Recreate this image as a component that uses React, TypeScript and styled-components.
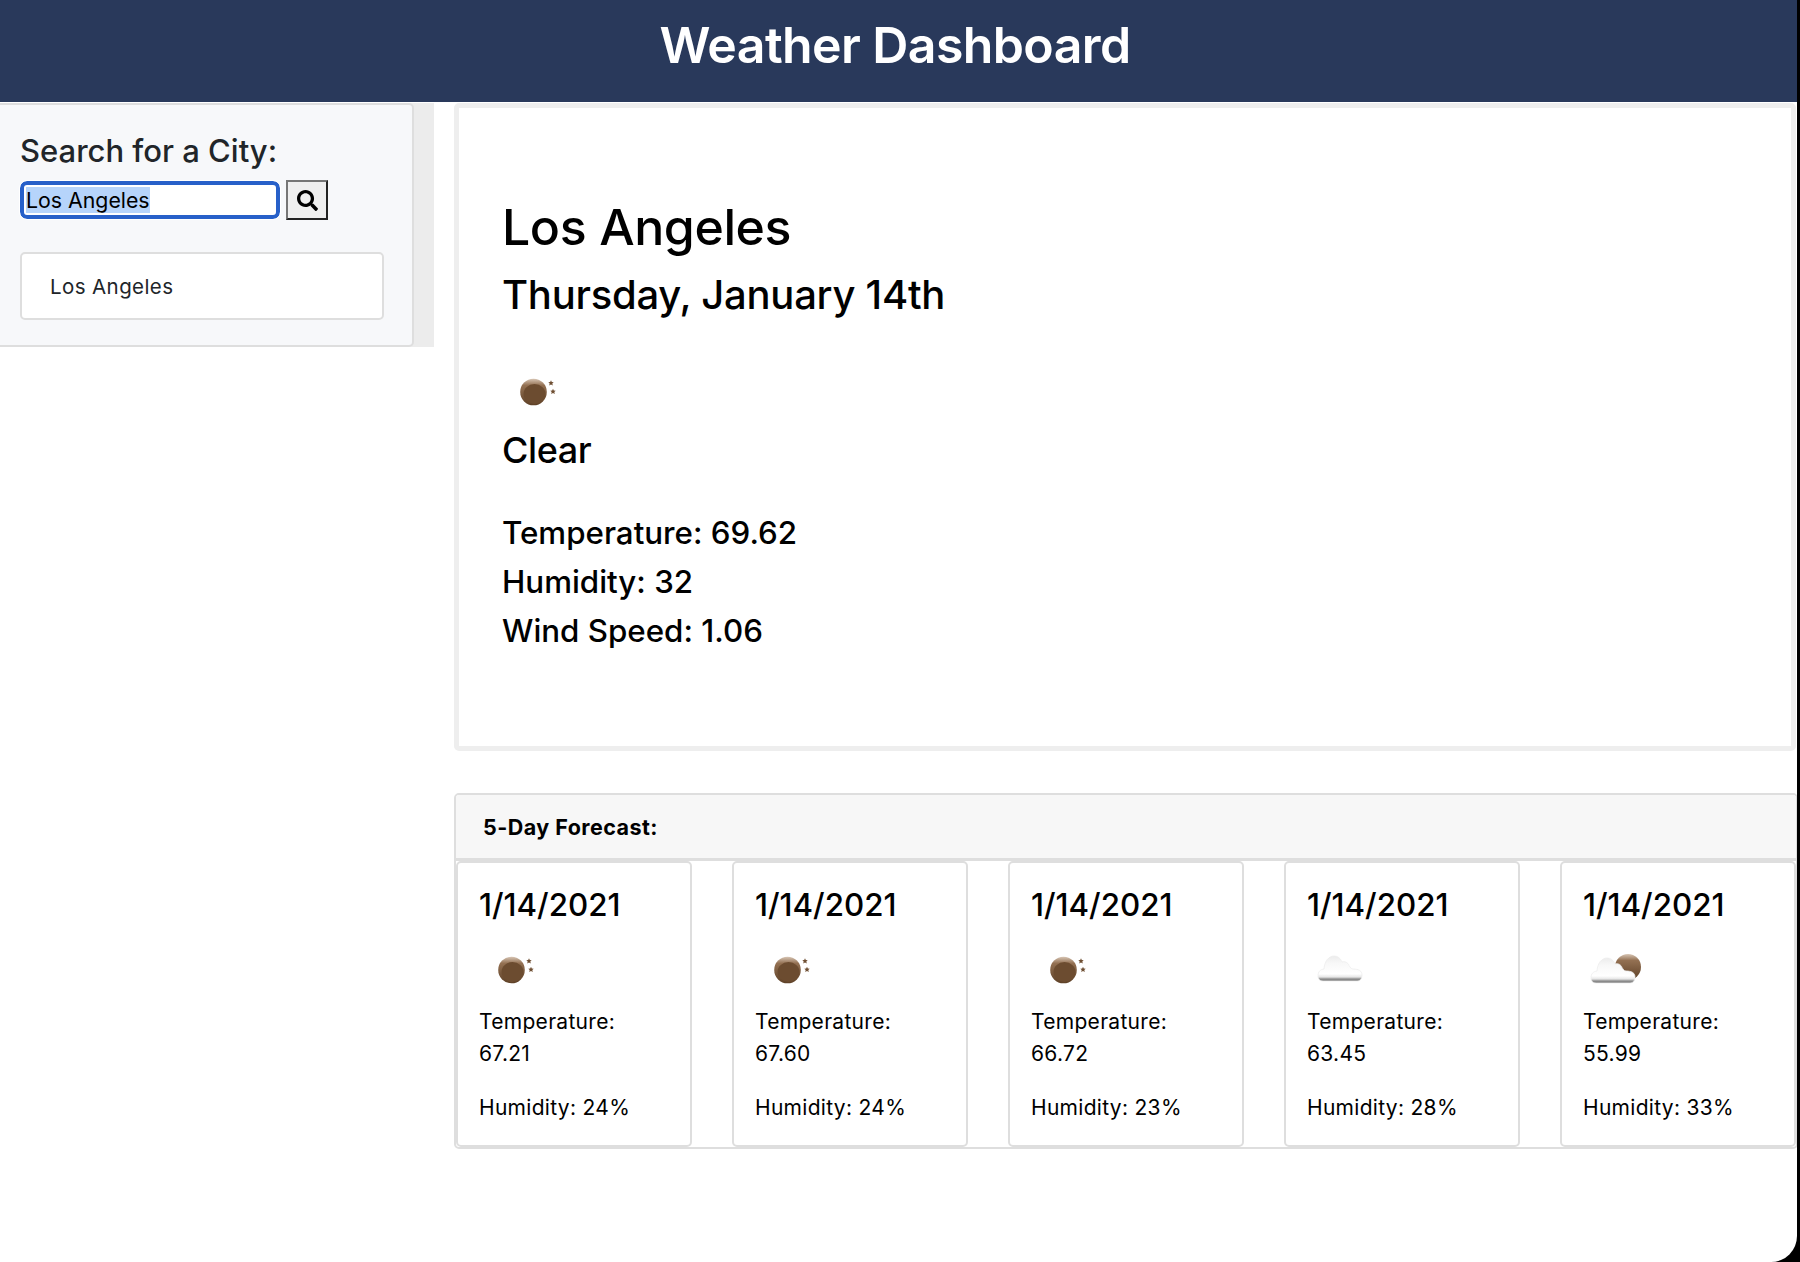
import { useEffect, useRef } from 'react';
import styled, { createGlobalStyle } from 'styled-components';
import { FaSearch } from 'react-icons/fa';

const GlobalStyle = createGlobalStyle`
  html, body {
    margin: 0;
    padding: 0;
    background: #000;
  }
  body {
    font-family: Inter, "Liberation Sans", sans-serif;
    color: #000;
  }
`;

const Page = styled.div`
  width: 1797px;
  height: 1262px;
  background: #fff;
  border-bottom-right-radius: 26px;
  overflow: hidden;
`;
const Header = styled.header`
  height: 102px;
  background: #29395b;
  color: #fff;
  display: flex;
  align-items: center;
  justify-content: center;
  padding-bottom: 12px;
  box-sizing: border-box;
`;
const Title = styled.h1`
  margin: 0 0 0 -7px;
  font-size: 50px;
  font-weight: 600;
  letter-spacing: -0.6px;
`;
const Content = styled.div`
  display: flex;
  align-items: flex-start;
  gap: 20px;
  padding-top: 1px;
`;
const Sidebar = styled.aside`
  width: 434px;
  flex: none;
  background: #ececec;
`;
const SearchCard = styled.div`
  width: 414px;
  height: 244px;
  box-sizing: border-box;
  background: #f7f8fa;
  border: 2px solid #dedede;
  border-left: none;
  border-radius: 0 5px 5px 0;
  padding: 27px 0 0 20px;
`;
const SearchLabel = styled.h2`
  margin: 0;
  font-size: 31px;
  line-height: 38px;
  font-weight: 500;
  color: #212529;
`;
const SearchRow = styled.form`
  display: flex;
  align-items: center;
  gap: 6px;
  margin-top: 10px;
`;
const CityInput = styled.input`
  width: 260px;
  height: 38px;
  box-sizing: border-box;
  border: 4px solid #2760c9;
  border-radius: 7px;
  outline: 1px solid #fff;
  padding: 0 2px;
  background: #fff;
  font-family: inherit;
  font-size: 21.300px;
  color: #000;
  &::selection {
    background: #b6d4fb;
  }
`;
const SearchButton = styled.button`
  width: 42px;
  height: 40px;
  box-sizing: border-box;
  display: flex;
  align-items: center;
  justify-content: center;
  padding: 0;
  background: #efefef;
  border: 2px solid;
  border-color: #767676 #222 #222 #767676;
  color: #000;
  font-size: 21px;
`;
const HistoryItem = styled.div`
  width: 364px;
  height: 68px;
  box-sizing: border-box;
  margin-top: 32px;
  display: flex;
  align-items: center;
  padding-left: 28px;
  background: #fff;
  border: 2px solid #dedede;
  border-radius: 5px;
  font-size: 20.500px;
  letter-spacing: 0.4px;
  color: #212529;
`;
const Main = styled.main`
  width: 1344px;
  flex: none;
`;
const CurrentPanel = styled.section`
  width: 1342px;
  height: 648px;
  box-sizing: border-box;
  border: 5px solid #eee;
  border-radius: 5px;
  padding: 90px 0 0 43px;
`;
const CityName = styled.h2`
  margin: 0;
  font-size: 50px;
  line-height: 58px;
  font-weight: 500;
  letter-spacing: -0.4px;
`;
const DateLine = styled.h3`
  margin: 15px 0 48px;
  font-size: 40px;
  line-height: 48px;
  font-weight: 500;
  letter-spacing: -0.25px;
`;
const Condition = styled.h4`
  margin: 11px 0 37px;
  font-size: 36px;
  line-height: 44px;
  font-weight: 500;
  letter-spacing: -0.4px;
`;
const Stat = styled.p`
  margin: 0;
  font-size: 31.300px;
  line-height: 49px;
  font-weight: 500;
`;
const ForecastPanel = styled.section`
  margin-top: 42px;
  height: 356px;
  box-sizing: border-box;
  border: 2px solid #dedede;
  border-radius: 5px;
  overflow: hidden;
`;
const ForecastHeader = styled.div`
  height: 66px;
  box-sizing: border-box;
  display: flex;
  align-items: center;
  padding-left: 27px;
  background: #f7f7f7;
  border-bottom: 3px solid #dedede;
  font-size: 21.500px;
  font-weight: 700;
  letter-spacing: 0.45px;
`;
const ForecastRow = styled.div`
  display: flex;
  justify-content: space-between;
`;
const DayCard = styled.article`
  width: 236px;
  height: 286px;
  box-sizing: border-box;
  border: 2px solid #dedede;
  border-radius: 5px;
  padding: 22px 0 0 21px;
`;
const DayDate = styled.h5`
  margin: 0 0 20px;
  font-size: 31.300px;
  line-height: 40px;
  font-weight: 500;
`;
const DayLine = styled.p<{ $gap?: boolean }>`
  margin: ${(p) => (p.$gap ? '22px' : '0')} 0 0;
  font-size: 21px;
  line-height: 32px;
  letter-spacing: 0.3px;
`;
const IconBox = styled.svg<{ $spaced?: boolean }>`
  display: block;
  width: 64px;
  height: 50px;
  margin-bottom: ${(p) => (p.$spaced ? '11px' : '0')};
`;

type IconKind = 'moon' | 'cloud' | 'partly';

const Defs = () => (
  <svg width="0" height="0" style={{ position: 'absolute' }} aria-hidden="true">
    <defs>
      <linearGradient id="ball" x1="0" y1="0" x2="0" y2="1">
        <stop offset="0" stopColor="#d8c6b5" />
        <stop offset="0.25" stopColor="#937052" />
        <stop offset="1" stopColor="#5e4127" />
      </linearGradient>
      <linearGradient id="puff" x1="0" y1="0" x2="0" y2="1">
        <stop offset="0" stopColor="#ececec" />
        <stop offset="0.3" stopColor="#f8f8f8" />
        <stop offset="0.72" stopColor="#fff" />
        <stop offset="0.84" stopColor="#e6e6e6" />
        <stop offset="0.91" stopColor="#999" />
        <stop offset="1" stopColor="#6c6c6c" />
      </linearGradient>
    </defs>
  </svg>
);

const CloudShape = ({ dx = 0, dy = 0 }: { dx?: number; dy?: number }) => (
  <path
    transform={`translate(${dx} ${dy})`}
    d="M16 36C12 36 11 33 11 30.500C11 27 13 24.500 17 24C17.500 16 22 11 27 11C31 11 33.500 13.500 35 17C38 16 41 17.500 42 20.500C43 22 44 24 46 24C52 24 55 26 55 30C55 34 53 36 50 36Z"
    fill="url(#puff)"
    stroke="#eeeeee"
    strokeWidth="0.8"
  />
);

const Star = ({ x, y }: { x: number; y: number }) => (
  <path
    transform={`translate(${x} ${y})`}
    d="M0-2.800L.8-.9 2.700-.8 1.300.5 1.800 2.400 0 1.400-1.800 2.400-1.300.5-2.700-.8-.8-.9Z"
    fill="#6f4f33"
  />
);

const WeatherIcon = ({ kind, spaced }: { kind: IconKind; spaced?: boolean }) => (
  <IconBox $spaced={spaced} viewBox="0 0 64 50">
    {kind === 'moon' && (
      <g transform={spaced ? 'translate(1 0)' : undefined}>
        <circle cx="31.500" cy="25" r="13.300" fill="url(#ball)" />
        <ellipse cx="32.500" cy="27" rx="11" ry="10" fill="#6c4c30" />
        <Star x={49} y={16} />
        <Star x={51} y={24.500} />
      </g>
    )}
    {kind === 'cloud' && <CloudShape />}
    {kind === 'partly' && (
      <>
        <circle cx="45" cy="22" r="13" fill="url(#ball)" />
        <CloudShape dx={-3} dy={2} />
      </>
    )}
  </IconBox>
);

const days: { temp: string; humidity: string; icon: IconKind }[] = [
  { temp: '67.21', humidity: '24', icon: 'moon' },
  { temp: '67.60', humidity: '24', icon: 'moon' },
  { temp: '66.72', humidity: '23', icon: 'moon' },
  { temp: '63.45', humidity: '28', icon: 'cloud' },
  { temp: '55.99', humidity: '33', icon: 'partly' },
];

const App = () => {
  const inputRef = useRef<HTMLInputElement>(null);

  useEffect(() => {
    inputRef.current?.focus();
    inputRef.current?.select();
  }, []);

  return (
    <Page>
      <GlobalStyle />
      <Defs />
      <Header>
        <Title>Weather Dashboard</Title>
      </Header>
      <Content>
        <Sidebar>
          <SearchCard>
            <SearchLabel>Search for a City:</SearchLabel>
            <SearchRow onSubmit={(e) => e.preventDefault()}>
              <CityInput ref={inputRef} defaultValue="Los Angeles" />
              <SearchButton type="submit" aria-label="Search">
                <FaSearch />
              </SearchButton>
            </SearchRow>
            <HistoryItem>Los Angeles</HistoryItem>
          </SearchCard>
        </Sidebar>
        <Main>
          <CurrentPanel>
            <CityName>Los Angeles</CityName>
            <DateLine>Thursday, January 14th</DateLine>
            <WeatherIcon kind="moon" />
            <Condition>Clear</Condition>
            <Stat>Temperature: 69.62</Stat>
            <Stat>Humidity: 32</Stat>
            <Stat>Wind Speed: 1.06</Stat>
          </CurrentPanel>
          <ForecastPanel>
            <ForecastHeader>5-Day Forecast:</ForecastHeader>
            <ForecastRow>
              {days.map((day) => (
                <DayCard key={day.temp}>
                  <DayDate>1/14/2021</DayDate>
                  <WeatherIcon kind={day.icon} spaced />
                  <DayLine>Temperature:</DayLine>
                  <DayLine>{day.temp}</DayLine>
                  <DayLine $gap>Humidity: {day.humidity}%</DayLine>
                </DayCard>
              ))}
            </ForecastRow>
          </ForecastPanel>
        </Main>
      </Content>
    </Page>
  );
};

export default App;
